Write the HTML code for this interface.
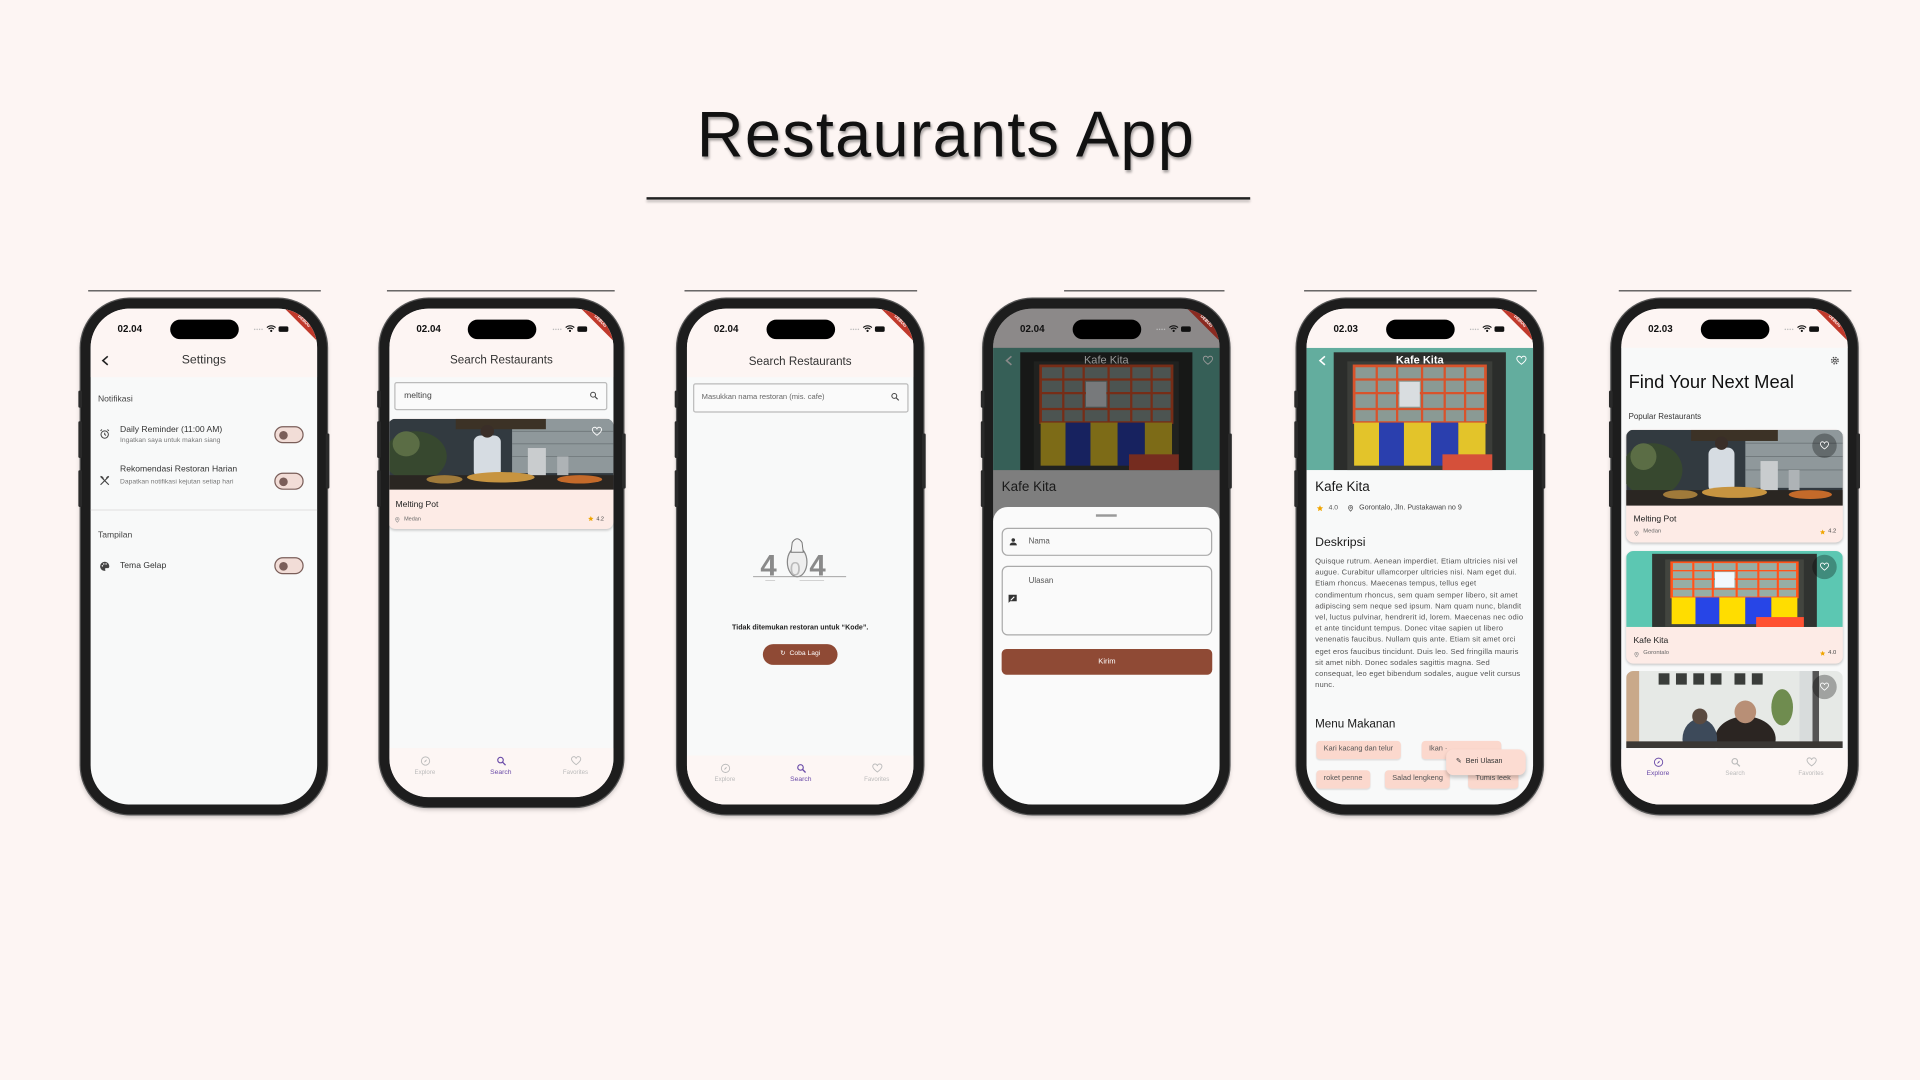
<!DOCTYPE html>
<html><head><meta charset="utf-8">
<style>
*{margin:0;padding:0;box-sizing:border-box}
html,body{width:1920px;height:1080px;overflow:hidden;background:#fdf5f3;font-family:"Liberation Sans",sans-serif;color:#222}
#wrap{position:absolute;left:0;top:0;width:1568px;height:882px;transform:scale(1.22449);transform-origin:0 0}
.title{position:absolute;left:0;width:1545px;top:80px;text-align:center;font-size:53px;color:#111;text-shadow:1px 2px 2px rgba(0,0,0,.35);letter-spacing:1px}
.uline{position:absolute;left:528px;top:161px;width:493px;height:1.5px;background:#222;box-shadow:0 2px 2px rgba(0,0,0,.25)}
.topl{position:absolute;top:237px;height:1px;background:#444}
.phone{position:absolute;top:244px;width:201px;height:421px;background:#1d1d1d;border-radius:40px;box-shadow:0 0 0 1px #555,0 2px 4px rgba(0,0,0,.25)}
.btn{position:absolute;width:3px;background:#2a2a2a;border-radius:1px}
.screen{position:absolute;left:8px;top:8px;right:8px;bottom:8px;border-radius:32px;overflow:hidden;background:#f8f9f9}
.ab{position:absolute}
.time{position:absolute;left:22px;top:12px;font-size:8px;font-weight:bold;color:#111}
.island{position:absolute;left:65px;top:9px;width:56px;height:16px;border-radius:8px;background:#000}
.stat{position:absolute;left:133px;top:12px}
.dbg{position:absolute;top:7px;right:-13px;width:48px;height:7px;background:#c0392b;transform:rotate(45deg);color:#fff;font-size:3.5px;text-align:center;line-height:7px;font-weight:bold}
.t7{font-size:7px}
.sub{font-size:5.5px;color:#777}
.tog{position:absolute;width:24px;height:14px;border:1.5px solid #7a5e59;border-radius:7px;background:#f2ddd7}
.tog i{position:absolute;left:3px;top:2.5px;width:7px;height:7px;border-radius:50%;background:#7a5e59}
.nav{position:absolute;left:0;right:0;top:360px;bottom:0;background:#fdf6f4}
.nav div{position:absolute;top:6px;width:50px;text-align:center;font-size:5px;color:#bbb}
.nav svg{display:block;margin:0 auto 2px}
.chip{position:absolute;height:15px;background:#fbd8cd;border-radius:3px;font-size:6px;color:#555;line-height:15px;padding:0 6px;box-shadow:0 1px 1px rgba(0,0,0,.1)}
</style></head><body>
<div id="wrap">
<div class="title">Restaurants App</div>
<div class="uline"></div>

<svg width="0" height="0" style="position:absolute">
<defs>
<symbol id="kafe" viewBox="0 0 100 54" preserveAspectRatio="none">
<rect width="100" height="54" fill="#63ad9e"/>
<rect x="12" y="2" width="76" height="52" fill="#2b2d2b"/>
<rect x="18" y="6" width="64" height="48" fill="#3b3d39"/>
<rect x="21" y="8" width="58" height="25" fill="#8a9a94" stroke="#d8532b" stroke-width="1.2"/>
<g stroke="#d8532b" stroke-width="1"><line x1="21" y1="14" x2="79" y2="14"/><line x1="21" y1="20" x2="79" y2="20"/><line x1="21" y1="27" x2="79" y2="27"/><line x1="31" y1="8" x2="31" y2="33"/><line x1="40" y1="8" x2="40" y2="33"/><line x1="51" y1="8" x2="51" y2="33"/><line x1="61" y1="8" x2="61" y2="33"/><line x1="70" y1="8" x2="70" y2="33"/></g>
<rect x="41" y="15" width="9" height="11" fill="#d9dde0"/>
<rect x="21" y="33" width="11" height="19" fill="#e3c42a"/><rect x="32" y="33" width="11" height="19" fill="#2a3fae"/><rect x="43" y="33" width="12" height="19" fill="#e3c42a"/><rect x="55" y="33" width="12" height="19" fill="#2a3fae"/><rect x="67" y="33" width="12" height="19" fill="#e3c42a"/>
<rect x="60" y="47" width="22" height="7" fill="#d5503a"/>
</symbol>
<symbol id="pot" viewBox="0 0 100 34" preserveAspectRatio="none">
<rect width="100" height="34" fill="#323a40"/>
<rect x="55" y="0" width="45" height="26" fill="#8f989b"/>
<g stroke="#6e7679" stroke-width=".4"><line x1="55" y1="6" x2="100" y2="6"/><line x1="55" y1="12" x2="100" y2="12"/><line x1="55" y1="18" x2="100" y2="18"/></g>
<rect x="30" y="0" width="40" height="5" fill="#3c3226"/>
<ellipse cx="12" cy="18" rx="14" ry="12" fill="#37482f"/>
<ellipse cx="8" cy="12" rx="6" ry="6" fill="#5b6d45"/>
<rect x="38" y="8" width="12" height="20" rx="3" fill="#d6dce2"/>
<circle cx="44" cy="6" r="3" fill="#3a2e28"/>
<rect x="62" y="14" width="8" height="14" fill="#c9ccce"/>
<rect x="75" y="18" width="5" height="10" fill="#aeb3b6"/>
<rect x="0" y="27" width="100" height="7" fill="#2a2622"/>
<ellipse cx="50" cy="28" rx="15" ry="2.5" fill="#c79440"/>
<ellipse cx="85" cy="29" rx="10" ry="2" fill="#c46a2a"/>
<ellipse cx="25" cy="29" rx="8" ry="2" fill="#a07a3a"/>
</symbol>
<symbol id="cafe" viewBox="0 0 100 34" preserveAspectRatio="none">
<rect width="100" height="34" fill="#e6e9e6"/>
<g fill="#3a3d3a"><rect x="15" y="1" width="5" height="5"/><rect x="23" y="1" width="5" height="5"/><rect x="31" y="1" width="5" height="5"/><rect x="39" y="1" width="5" height="5"/><rect x="50" y="1" width="5" height="5"/><rect x="58" y="1" width="5" height="5"/></g>
<rect x="0" y="0" width="6" height="34" fill="#c9a98a"/>
<rect x="80" y="0" width="6" height="34" fill="#d8dcdc"/>
<rect x="86" y="0" width="3" height="34" fill="#555"/>
<ellipse cx="55" cy="30" rx="14" ry="10" fill="#2b2522"/>
<circle cx="55" cy="18" r="5" fill="#b88f76"/>
<ellipse cx="34" cy="30" rx="8" ry="9" fill="#3d4a5a"/>
<circle cx="34" cy="20" r="3.5" fill="#5a4a40"/>
<ellipse cx="72" cy="16" rx="5" ry="8" fill="#6f8c4f"/>
<rect x="0" y="31" width="100" height="3" fill="#3a3835"/>
</symbol>
<symbol id="stat" viewBox="0 0 30 8"><g fill="#bbb"><circle cx="1" cy="5" r=".6"/><circle cx="3" cy="5" r=".6"/><circle cx="5" cy="5" r=".6"/><circle cx="7" cy="5" r=".6"/></g><path d="M11 3.5 a5 5 0 0 1 7 0 M12.3 4.8 a3 3 0 0 1 4.4 0" stroke="#111" fill="none" stroke-width="1"/><circle cx="14.5" cy="6.2" r=".9" fill="#111"/><rect x="20.5" y="2.5" width="8" height="4.5" rx="1.3" fill="#111"/></symbol>
<symbol id="heart" viewBox="0 0 24 24"><path d="M12 20 C4 14 2 11 2 8 a5 5 0 0 1 10-1 a5 5 0 0 1 10 1 c0 3-2 6-10 12z" fill="none" stroke="currentColor" stroke-width="2"/></symbol>
<symbol id="search" viewBox="0 0 24 24"><circle cx="10" cy="10" r="6" fill="none" stroke="currentColor" stroke-width="2.5"/><line x1="14.5" y1="14.5" x2="21" y2="21" stroke="currentColor" stroke-width="2.8"/></symbol>
<symbol id="compass" viewBox="0 0 24 24"><circle cx="12" cy="12" r="9" fill="none" stroke="currentColor" stroke-width="2"/><path d="M15.5 8.5 L13 13 L8.5 15.5 L11 11z" fill="currentColor"/></symbol>
<symbol id="star" viewBox="0 0 24 24"><path d="M12 2l3 7 7.5.6-5.7 4.9 1.8 7.3L12 17.9 5.4 21.8l1.8-7.3L1.5 9.6 9 9z" fill="#f0a500"/></symbol>
<symbol id="pin" viewBox="0 0 24 24"><path d="M12 22s-7-7-7-12a7 7 0 0 1 14 0c0 5-7 12-7 12z" fill="none" stroke="currentColor" stroke-width="2"/><circle cx="12" cy="10" r="2.5" fill="none" stroke="currentColor" stroke-width="2"/></symbol>
</defs></svg>

<div class="topl" style="left:72px;width:190px"></div>
<div class="topl" style="left:316px;width:186px"></div>
<div class="topl" style="left:559px;width:190px"></div>
<div class="topl" style="left:869px;width:131px"></div>
<div class="topl" style="left:1065px;width:190px"></div>
<div class="topl" style="left:1322px;width:190px"></div>

<!-- PHONE 1 -->
<div class="phone" style="left:66px">
<div class="btn" style="left:-2px;top:75px;height:14px"></div><div class="btn" style="left:-2px;top:100px;height:30px"></div><div class="btn" style="left:-2px;top:140px;height:30px"></div><div class="btn" style="right:-2px;top:110px;height:45px"></div>
<div class="screen">
<div class="ab" style="left:0;top:0;width:100%;height:56px;background:#fdf5f3"></div>
<div class="time">02.04</div><div class="island"></div><svg class="stat" width="30" height="8"><use href="#stat"/></svg><div class="dbg">DEBUG</div>
<svg class="ab" style="left:8px;top:38px" width="8" height="9" viewBox="0 0 8 9"><path d="M6 1 L2 4.5 L6 8" fill="none" stroke="#222" stroke-width="1.3"/></svg>
<div class="ab" style="left:0;width:100%;top:37px;text-align:center;font-size:10px;color:#333">Settings</div>
<div class="ab t7" style="left:6px;top:71px;color:#444">Notifikasi</div>
<svg class="ab" style="left:7px;top:98px" width="9" height="9" viewBox="0 0 24 24"><circle cx="12" cy="13" r="8" fill="none" stroke="#444" stroke-width="2.2"/><path d="M12 9v4l3 2M3 5l3-3M21 5l-3-3" stroke="#444" stroke-width="2.2" fill="none"/></svg>
<div class="ab t7" style="left:24px;top:96px;color:#333">Daily Reminder (11:00 AM)</div>
<div class="ab sub" style="left:24px;top:105px">Ingatkan saya untuk makan siang</div>
<div class="tog" style="left:150px;top:96px"><i></i></div>
<svg class="ab" style="left:7px;top:136px" width="9" height="9" viewBox="0 0 24 24"><path d="M3 3l18 18M21 3L3 21M3 3c3 0 6 3 6 6M21 3c-3 0-5 3-5 5" stroke="#444" stroke-width="2.5" fill="none"/></svg>
<div class="ab t7" style="left:24px;top:128px;color:#333">Rekomendasi Restoran Harian</div>
<div class="ab sub" style="left:24px;top:138px;width:115px;line-height:8px">Dapatkan notifikasi kejutan setiap hari</div>
<div class="tog" style="left:150px;top:134px"><i></i></div>
<div class="ab" style="left:0;top:164px;width:100%;height:1px;background:#e5e5e5"></div>
<div class="ab t7" style="left:6px;top:182px;color:#444">Tampilan</div>
<svg class="ab" style="left:7px;top:206px" width="9" height="9" viewBox="0 0 24 24"><path d="M12 2a10 10 0 0 0 0 20c2 0 2-2 1-3s0-3 2-3h3a4 4 0 0 0 4-4C22 6 17 2 12 2z" fill="#444"/><circle cx="7" cy="11" r="1.6" fill="#fff"/><circle cx="10" cy="7" r="1.6" fill="#fff"/><circle cx="15" cy="7" r="1.6" fill="#fff"/></svg>
<div class="ab t7" style="left:24px;top:207px;color:#333">Tema Gelap</div>
<div class="tog" style="left:150px;top:203px"><i></i></div>
</div></div>

<!-- PHONE 2 -->
<div class="phone" style="left:310px;width:199px;height:415px">
<div class="btn" style="left:-2px;top:75px;height:14px"></div><div class="btn" style="left:-2px;top:100px;height:30px"></div><div class="btn" style="left:-2px;top:140px;height:30px"></div><div class="btn" style="right:-2px;top:110px;height:45px"></div>
<div class="screen" style="background:#f8f9f9">
<div class="ab" style="left:0;top:0;width:100%;height:56px;background:#fdf5f3"></div>
<div class="time">02.04</div><div class="island" style="left:64px"></div><svg class="stat" width="30" height="8"><use href="#stat"/></svg><div class="dbg">DEBUG</div>
<div class="ab" style="left:0;width:100%;top:37px;text-align:center;font-size:9.5px;color:#333">Search Restaurants</div>
<div class="ab" style="left:4px;top:60px;width:174px;height:23px;border:1px solid #bbb;border-radius:2px;background:#fafafa"></div>
<div class="ab t7" style="left:12px;top:68px;color:#444">melting</div>
<svg class="ab" style="left:163px;top:67px;color:#444" width="8" height="8"><use href="#search"/></svg>
<div class="ab" style="left:-1px;top:90px;width:184px;height:90px;border-radius:6px;overflow:hidden;background:#fdebe6;box-shadow:0 1px 2px rgba(0,0,0,.2)">
<svg width="184" height="58" style="display:block"><use href="#pot" width="184" height="58"/></svg>
<svg class="ab" style="left:166px;top:6px;color:#fff" width="9" height="9"><use href="#heart"/></svg>
<div class="ab t7" style="left:6px;top:67px;color:#222">Melting Pot</div>
<svg class="ab" style="left:5px;top:80px;color:#888" width="5" height="5"><use href="#pin"/></svg>
<div class="ab" style="left:13px;top:79px;font-size:4.5px;color:#666">Medan</div>
<svg class="ab" style="left:163px;top:79px" width="5" height="5"><use href="#star"/></svg>
<div class="ab" style="left:170px;top:79px;font-size:4.5px;color:#444">4.2</div>
</div>
<div class="nav" style="top:359px">
<div style="left:4px"><svg width="9" height="9" style="color:#bbb"><use href="#compass"/></svg>Explore</div>
<div style="left:66px;color:#6a4ba8;font-size:5.5px"><svg width="9" height="9" style="color:#6a4ba8"><use href="#search"/></svg>Search</div>
<div style="left:127px"><svg width="9" height="9" style="color:#bbb"><use href="#heart"/></svg>Favorites</div>
</div>
</div></div>

<!-- PHONE 3 -->
<div class="phone" style="left:553px">
<div class="btn" style="left:-2px;top:75px;height:14px"></div><div class="btn" style="left:-2px;top:100px;height:30px"></div><div class="btn" style="left:-2px;top:140px;height:30px"></div><div class="btn" style="right:-2px;top:110px;height:45px"></div>
<div class="screen">
<div class="ab" style="left:0;top:0;width:100%;height:56px;background:#fdf5f3"></div>
<div class="time">02.04</div><div class="island"></div><svg class="stat" width="30" height="8"><use href="#stat"/></svg><div class="dbg">DEBUG</div>
<div class="ab" style="left:0;width:100%;top:38px;text-align:center;font-size:9.5px;color:#333">Search Restaurants</div>
<div class="ab" style="left:5px;top:61px;width:176px;height:24px;border:1px solid #bbb;border-radius:2px;background:#fafafa"></div>
<div class="ab" style="left:12px;top:69px;font-size:6.2px;color:#666">Masukkan nama restoran (mis. cafe)</div>
<svg class="ab" style="left:166px;top:68px;color:#444" width="8" height="8"><use href="#search"/></svg>
<svg class="ab" style="left:52px;top:185px" width="80" height="40" viewBox="0 0 80 40">
<text x="8" y="33" font-size="24" font-weight="bold" fill="#8a8a8a" font-family="Liberation Sans">4</text>
<ellipse cx="38" cy="22" rx="8" ry="12" fill="#eee" stroke="#888" stroke-width="1"/>
<text x="32" y="33" font-size="16" fill="#bbb" font-family="Liberation Sans">0</text>
<path d="M34 6 q4 -6 8 0 l1 8 h-10z" fill="#f4f4f4" stroke="#777" stroke-width=".8"/>
<text x="48" y="33" font-size="24" font-weight="bold" fill="#8a8a8a" font-family="Liberation Sans">4</text>
<line x1="2" y1="34" x2="78" y2="34" stroke="#999" stroke-width=".7"/>
<line x1="12" y1="37" x2="20" y2="37" stroke="#bbb" stroke-width=".5"/><line x1="40" y1="37" x2="60" y2="37" stroke="#bbb" stroke-width=".5"/>
</svg>
<div class="ab" style="left:0;width:100%;top:258px;text-align:center;font-size:5.8px;font-weight:bold;color:#222">Tidak ditemukan restoran untuk “Kode”.</div>
<div class="ab" style="left:62px;top:274px;width:61px;height:17px;border-radius:8.5px;background:#8f4a35;color:#fff;font-size:5.5px;line-height:17px;text-align:center">↻ &nbsp;Coba Lagi</div>
<div class="nav" style="top:365px">
<div style="left:6px"><svg width="9" height="9" style="color:#bbb"><use href="#compass"/></svg>Explore</div>
<div style="left:68px;color:#6a4ba8;font-size:5.5px"><svg width="9" height="9" style="color:#6a4ba8"><use href="#search"/></svg>Search</div>
<div style="left:130px"><svg width="9" height="9" style="color:#bbb"><use href="#heart"/></svg>Favorites</div>
</div>
</div></div>

<!-- PHONE 4 -->
<div class="phone" style="left:803px">
<div class="btn" style="left:-2px;top:75px;height:14px"></div><div class="btn" style="left:-2px;top:100px;height:30px"></div><div class="btn" style="left:-2px;top:140px;height:30px"></div><div class="btn" style="right:-2px;top:110px;height:45px"></div>
<div class="screen" style="background:#7e7e7e">
<div class="ab" style="left:0;top:0;width:100%;height:32px;background:#8c8989"></div>
<svg class="ab" style="left:0;top:32px" width="185" height="100"><use href="#kafe" width="185" height="100"/><rect width="185" height="100" fill="rgba(0,0,0,.45)"/></svg>
<div class="time">02.04</div><div class="island"></div><svg class="stat" width="30" height="8"><use href="#stat"/></svg><div class="dbg" style="background:#8a2a20">DEBUG</div>
<svg class="ab" style="left:9px;top:38px" width="8" height="9" viewBox="0 0 8 9"><path d="M6 1 L2 4.5 L6 8" fill="none" stroke="#888" stroke-width="1.3"/></svg>
<div class="ab" style="left:0;width:100%;top:37px;text-align:center;font-size:9px;color:#999">Kafe Kita</div>
<svg class="ab" style="left:171px;top:38px;color:#999" width="9" height="9"><use href="#heart"/></svg>
<div class="ab" style="left:7px;top:140px;font-size:11px;color:#1a1a1a">Kafe Kita</div>
<div class="ab" style="left:0;top:162px;width:100%;bottom:0;background:#fafafa;border-radius:12px 12px 0 0"></div>
<div class="ab" style="left:84px;top:168px;width:17px;height:1.5px;background:#999"></div>
<div class="ab" style="left:7px;top:179px;width:172px;height:23px;border:1px solid #aaa;border-radius:5px"></div>
<svg class="ab" style="left:13px;top:187px" width="7" height="7" viewBox="0 0 24 24"><circle cx="12" cy="7" r="5" fill="#333"/><path d="M2 22c0-6 5-8 10-8s10 2 10 8z" fill="#333"/></svg>
<div class="ab" style="left:29px;top:187px;font-size:6.5px;color:#555">Nama</div>
<div class="ab" style="left:7px;top:210px;width:172px;height:57px;border:1px solid #aaa;border-radius:5px"></div>
<div class="ab" style="left:29px;top:219px;font-size:6.5px;color:#555">Ulasan</div>
<svg class="ab" style="left:12px;top:233px" width="8" height="8" viewBox="0 0 24 24"><path d="M2 2h20v16H6l-4 4z" fill="#333"/><path d="M7 14l8-8 2 2-8 8H7z" fill="#fff"/></svg>
<div class="ab" style="left:7px;top:278px;width:172px;height:21px;border-radius:4px;background:#8f4a35;color:#fff;font-size:6.2px;line-height:21px;text-align:center">Kirim</div>
</div></div>

<!-- PHONE 5 -->
<div class="phone" style="left:1059px">
<div class="btn" style="left:-2px;top:75px;height:14px"></div><div class="btn" style="left:-2px;top:100px;height:30px"></div><div class="btn" style="left:-2px;top:140px;height:30px"></div><div class="btn" style="right:-2px;top:110px;height:45px"></div>
<div class="screen">
<div class="ab" style="left:0;top:0;width:100%;height:32px;background:#fdf5f3"></div>
<svg class="ab" style="left:0;top:32px" width="185" height="100"><use href="#kafe" width="185" height="100"/></svg>
<div class="time">02.03</div><div class="island"></div><svg class="stat" width="30" height="8"><use href="#stat"/></svg><div class="dbg">DEBUG</div>
<svg class="ab" style="left:9px;top:38px" width="8" height="9" viewBox="0 0 8 9"><path d="M6 1 L2 4.5 L6 8" fill="none" stroke="#fff" stroke-width="1.3"/></svg>
<div class="ab" style="left:0;width:100%;top:37px;text-align:center;font-size:9px;font-weight:bold;color:#fff">Kafe Kita</div>
<svg class="ab" style="left:171px;top:38px;color:#fff" width="9" height="9"><use href="#heart"/></svg>
<div class="ab" style="left:7px;top:140px;font-size:11px;color:#1a1a1a">Kafe Kita</div>
<svg class="ab" style="left:8px;top:160px" width="6" height="6"><use href="#star"/></svg>
<div class="ab" style="left:18px;top:160px;font-size:5.5px;color:#555">4.0</div>
<svg class="ab" style="left:33px;top:160px;color:#444" width="6" height="6"><use href="#pin"/></svg>
<div class="ab" style="left:43px;top:160px;font-size:5.8px;color:#444">Gorontalo, Jln. Pustakawan no 9</div>
<div class="ab" style="left:7px;top:186px;font-size:10px;color:#1a1a1a">Deskripsi</div>
<div class="ab" style="left:7px;top:202px;width:172px;font-size:6.2px;letter-spacing:.15px;line-height:9.2px;color:#555">Quisque rutrum. Aenean imperdiet. Etiam ultricies nisi vel augue. Curabitur ullamcorper ultricies nisi. Nam eget dui. Etiam rhoncus. Maecenas tempus, tellus eget condimentum rhoncus, sem quam semper libero, sit amet adipiscing sem neque sed ipsum. Nam quam nunc, blandit vel, luctus pulvinar, hendrerit id, lorem. Maecenas nec odio et ante tincidunt tempus. Donec vitae sapien ut libero venenatis faucibus. Nullam quis ante. Etiam sit amet orci eget eros faucibus tincidunt. Duis leo. Sed fringilla mauris sit amet nibh. Donec sodales sagittis magna. Sed consequat, leo eget bibendum sodales, augue velit cursus nunc.</div>
<div class="ab" style="left:7px;top:334px;font-size:9.5px;color:#1a1a1a">Menu Makanan</div>
<div class="chip" style="left:8px;top:353px">Kari kacang dan telur</div>
<div class="chip" style="left:94px;top:353px;width:65px">Ikan ·</div>
<div class="chip" style="left:8px;top:377px">roket penne</div>
<div class="chip" style="left:64px;top:377px">Salad lengkeng</div>
<div class="chip" style="left:132px;top:377px">Tumis leek</div>
<div class="ab" style="left:114px;top:360px;width:65px;height:21px;border-radius:6px;background:#fcdcd2;box-shadow:0 2px 3px rgba(0,0,0,.2);font-size:5.8px;line-height:21px;color:#333;padding-left:8px">✎ &nbsp;Beri Ulasan</div>
</div></div>

<!-- PHONE 6 -->
<div class="phone" style="left:1316px">
<div class="btn" style="left:-2px;top:75px;height:14px"></div><div class="btn" style="left:-2px;top:100px;height:30px"></div><div class="btn" style="left:-2px;top:140px;height:30px"></div><div class="btn" style="right:-2px;top:110px;height:45px"></div>
<div class="screen">
<div class="ab" style="left:0;top:0;width:100%;height:32px;background:#fdf5f3"></div>
<div class="time">02.03</div><div class="island"></div><svg class="stat" width="30" height="8"><use href="#stat"/></svg><div class="dbg">DEBUG</div>
<svg class="ab" style="left:170px;top:38px" width="9" height="9" viewBox="0 0 24 24"><circle cx="12" cy="12" r="7" fill="none" stroke="#444" stroke-width="3" stroke-dasharray="3 2.5"/><circle cx="12" cy="12" r="3" fill="none" stroke="#444" stroke-width="2"/></svg>
<div class="ab" style="left:6px;top:52px;font-size:15px;color:#111">Find Your Next Meal</div>
<div class="ab" style="left:6px;top:85px;font-size:6.5px;color:#333">Popular Restaurants</div>
<div class="ab" style="left:4px;top:99px;width:177px;height:92px;border-radius:6px;overflow:hidden;background:#fdebe6;box-shadow:0 1px 2px rgba(0,0,0,.2)">
<svg width="177" height="62" style="display:block"><use href="#pot" width="177" height="62"/></svg>
<div class="ab" style="left:152px;top:3px;width:20px;height:20px;border-radius:50%;background:rgba(0,0,0,.3)"></div>
<svg class="ab" style="left:158px;top:9px;color:#fff" width="8" height="8"><use href="#heart"/></svg>
<div class="ab t7" style="left:6px;top:70px;color:#222">Melting Pot</div>
<svg class="ab" style="left:6px;top:82px;color:#888" width="5" height="5"><use href="#pin"/></svg>
<div class="ab" style="left:14px;top:81px;font-size:4.8px;color:#666">Medan</div>
<svg class="ab" style="left:158px;top:81px" width="5" height="5"><use href="#star"/></svg>
<div class="ab" style="left:165px;top:81px;font-size:4.8px;color:#444">4.2</div>
</div>
<div class="ab" style="left:4px;top:198px;width:177px;height:92px;border-radius:6px;overflow:hidden;background:#fdebe6;box-shadow:0 1px 2px rgba(0,0,0,.2)">
<svg width="177" height="62" style="display:block;filter:saturate(1.3) brightness(1.12)"><use href="#kafe" width="177" height="62"/></svg>
<div class="ab" style="left:152px;top:3px;width:20px;height:20px;border-radius:50%;background:rgba(0,0,0,.3)"></div>
<svg class="ab" style="left:158px;top:9px;color:#fff" width="8" height="8"><use href="#heart"/></svg>
<div class="ab t7" style="left:6px;top:70px;color:#222">Kafe Kita</div>
<svg class="ab" style="left:6px;top:82px;color:#888" width="5" height="5"><use href="#pin"/></svg>
<div class="ab" style="left:14px;top:81px;font-size:4.8px;color:#666">Gorontalo</div>
<svg class="ab" style="left:158px;top:81px" width="5" height="5"><use href="#star"/></svg>
<div class="ab" style="left:165px;top:81px;font-size:4.8px;color:#444">4.0</div>
</div>
<div class="ab" style="left:4px;top:296px;width:177px;height:70px;border-radius:6px 6px 0 0;overflow:hidden">
<svg width="177" height="63" style="display:block"><use href="#cafe" width="177" height="63"/></svg>
<div class="ab" style="left:152px;top:3px;width:20px;height:20px;border-radius:50%;background:rgba(0,0,0,.3)"></div>
<svg class="ab" style="left:158px;top:9px;color:#fff" width="8" height="8"><use href="#heart"/></svg>
</div>
<div class="nav">
<div style="left:5px;color:#6a4ba8;font-size:5.5px"><svg width="9" height="9" style="color:#6a4ba8"><use href="#compass"/></svg>Explore</div>
<div style="left:68px"><svg width="9" height="9" style="color:#bbb"><use href="#search"/></svg>Search</div>
<div style="left:130px"><svg width="9" height="9" style="color:#bbb"><use href="#heart"/></svg>Favorites</div>
</div>
</div></div>

</div>
</body></html>
